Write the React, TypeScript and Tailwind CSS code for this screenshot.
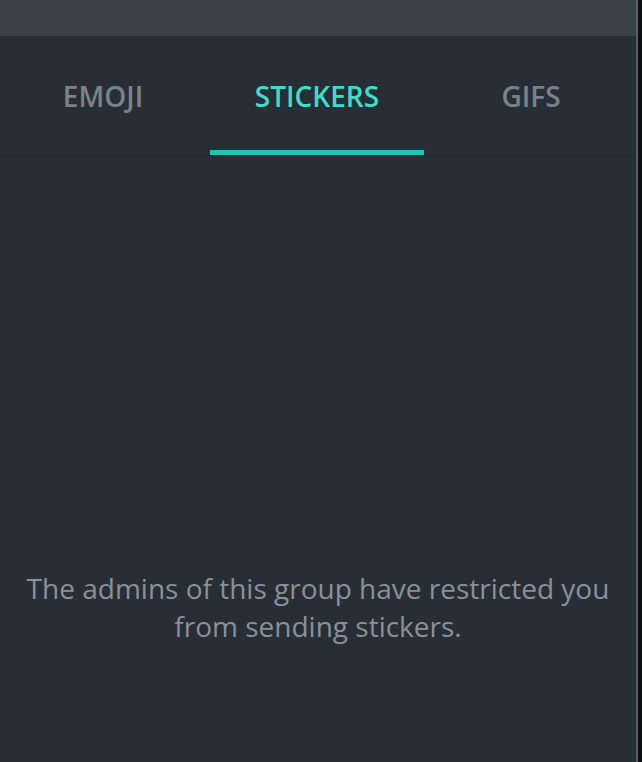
export default function App() {
  return (
    <div className="flex h-[762px] w-[642px] overflow-hidden bg-[#111316]" style={{ fontFamily: '"Open Sans", sans-serif' }}>
      <div className="flex w-[636px] flex-col bg-[#282e35]">
        <div className="h-[36px] shrink-0 bg-[#3b4149]" />
        <div className="flex h-[120px] shrink-0 border-b border-[#22272d] -ml-1 w-[642px]">
          <div className="flex w-[214px] flex-col items-center justify-between">
            <div className="pt-[46px] text-[28px] font-semibold leading-none text-[#7b818a]">EMOJI</div>
          </div>
          <div className="flex w-[214px] flex-col items-center justify-between">
            <div className="pt-[46px] text-[28px] font-semibold leading-none text-[#3fdcc8]">STICKERS</div>
            <div className="h-[5px] w-full bg-[#1cc7b1]" />
          </div>
          <div className="flex w-[214px] flex-col items-center justify-between">
            <div className="pt-[46px] text-[28px] font-semibold leading-none text-[#7b818a]">GIFS</div>
          </div>
        </div>
        <div className="flex flex-1 flex-col items-center pt-[413px]">
          <p className="whitespace-nowrap text-center text-[28px] leading-[38px] text-[#8a9099]">
            The admins of this group have restricted you
            <br />
            from sending stickers.
          </p>
        </div>
      </div>
      <div className="w-[2px] bg-[#5b6067]" />
      <div className="flex-1 bg-[#0d0f11]" />
    </div>
  );
}
